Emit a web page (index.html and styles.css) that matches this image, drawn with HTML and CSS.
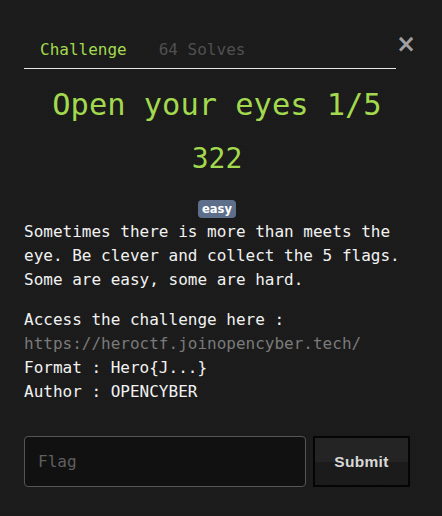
FILE: index.html
```html
<!DOCTYPE html>
<html lang="en">
<head>
<meta charset="utf-8">
<title>Open your eyes 1/5</title>
<link rel="stylesheet" href="styles.css">
</head>
<body>
<div class="modal">
  <div class="header">
    <nav class="tabs">
      <a class="tab active" href="#">Challenge</a>
      <a class="tab" href="#">64 Solves</a>
    </nav>
    <button class="close" type="button" aria-label="Close">&times;</button>
  </div>
  <h2 class="title">Open your eyes 1/5</h2>
  <h3 class="points">322</h3>
  <div class="tags"><span class="badge">easy</span></div>
  <div class="desc">
    <p>Sometimes there is more than meets the eye. Be clever and collect the 5 flags. Some are easy, some are hard.</p>
    <p>Access the challenge here :<br><a class="link" href="#">https://heroctf.joinopencyber.tech/</a><br>Format : Hero{J...}<br>Author : OPENCYBER</p>
  </div>
  <form class="submit-row" onsubmit="return false">
    <input class="flag" type="text" placeholder="Flag">
    <button class="submit" type="submit">Submit</button>
  </form>
</div>
</body>
</html>
```
FILE: styles.css
```css
html, body {
  margin: 0;
  padding: 0;
}
body {
  width: 442px;
  height: 516px;
  overflow: hidden;
  background-color: #1c1c1c;
  background-image:
    repeating-linear-gradient(0deg, rgba(0,0,0,0.05) 0 1px, transparent 1px 3px),
    repeating-linear-gradient(90deg, rgba(0,0,0,0.05) 0 1px, transparent 1px 3px);
  font-family: "DejaVu Sans Mono", monospace;
  font-size: 16px;
  color: #f2f2f2;
}
.modal {
  padding: 31px 32px 0 24px;
}
.header {
  display: flex;
  align-items: flex-start;
}
.tabs {
  flex: 1;
  display: flex;
  border-bottom: 1px solid #e6e6e6;
}
.tab {
  padding: 8px 16px;
  line-height: 21px;
  color: #505050;
  text-decoration: none;
}
.tab.active {
  color: #a3d94e;
}
.close {
  margin: 1px 2px 0 0;
  padding: 0;
  width: 12px;
  border: 0;
  background: none;
  color: #a0a0a0;
  font-family: "DejaVu Sans", sans-serif;
  font-weight: 700;
  font-size: 24px;
  line-height: 1;
  text-align: right;
  cursor: pointer;
}
.title {
  margin: 18px 0 0;
  text-align: center;
  font-weight: 400;
  font-size: 30.4px;
  line-height: 1.2;
  color: #a3d94e;
}
.points {
  margin: 19px 0 0;
  text-align: center;
  font-weight: 400;
  font-size: 28px;
  line-height: 1.2;
  color: #a3d94e;
}
.tags {
  margin-top: 24px;
  text-align: center;
  line-height: 0;
}
.badge {
  display: inline-block;
  padding: 0 4px;
  height: 18px;
  line-height: 18px;
  border-radius: 4px;
  background: #5d6f8b;
  color: #fff;
  font-family: "DejaVu Sans", sans-serif;
  font-weight: 700;
  font-size: 11.5px;
}
.desc {
  margin-top: 2px;
  width: 380px;
}
.desc p {
  margin: 0 0 16px;
  line-height: 24px;
}
.desc p:last-child {
  margin-bottom: 0;
}
.link {
  color: #7a7a7a;
  text-decoration: none;
}
.submit-row {
  display: flex;
  gap: 7px;
  margin-top: 32px;
}
.flag {
  flex: 1;
  box-sizing: border-box;
  height: 51px;
  margin: 0;
  padding: 0 13px;
  border: 1px solid #555;
  border-radius: 4px;
  background: #111;
  color: #eee;
  font-family: "DejaVu Sans Mono", monospace;
  font-size: 16px;
  outline: none;
}
.flag::placeholder {
  color: #5f5f5f;
}
.submit {
  box-sizing: border-box;
  width: 97px;
  height: 51px;
  margin: 0;
  border: 2px solid #050505;
  background: linear-gradient(#242424 0 50%, #1b1b1b 50% 100%);
  color: #d8d8d8;
  font-family: "Liberation Sans", Arial, sans-serif;
  font-weight: 700;
  font-size: 15.5px;
  letter-spacing: 0.3px;
  cursor: pointer;
}
```
